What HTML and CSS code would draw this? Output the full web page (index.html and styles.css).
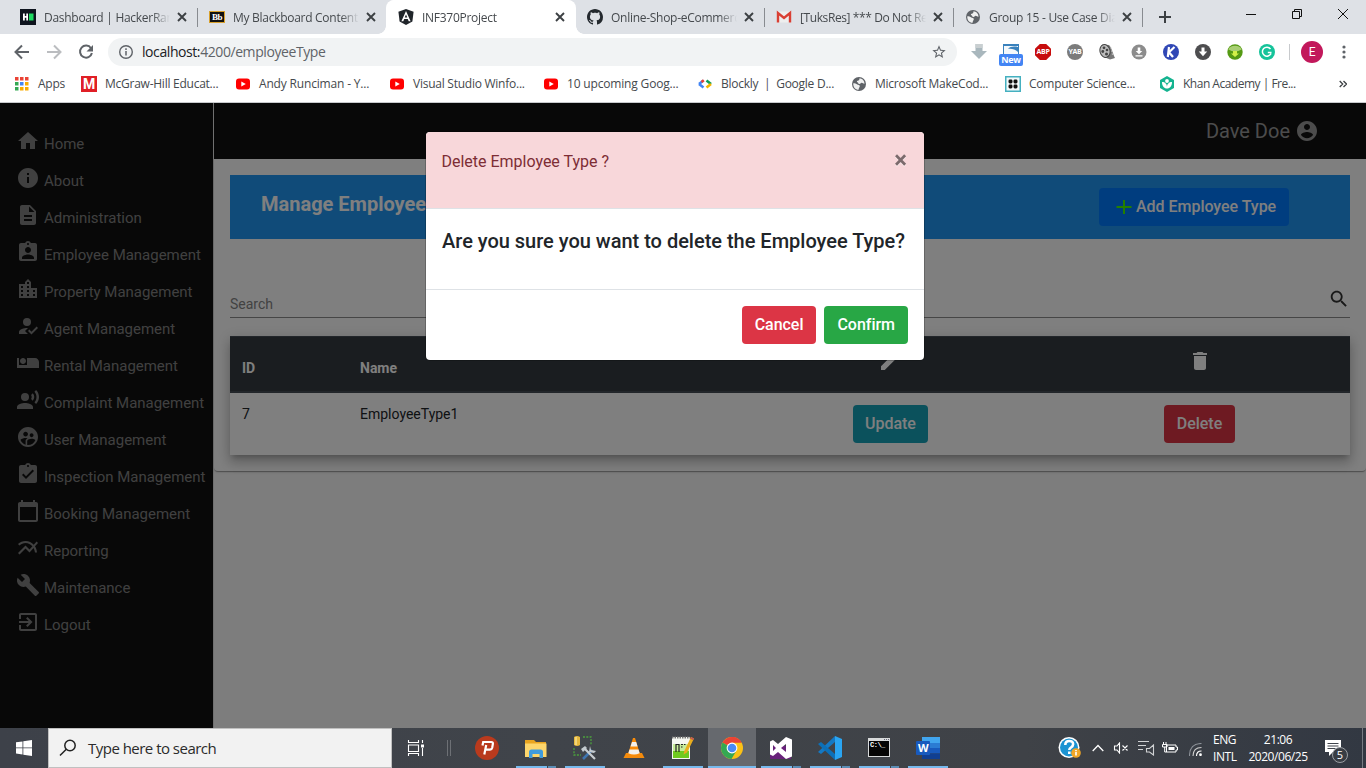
FILE: index.html
```html
<!DOCTYPE html>
<html lang="en">
<head>
<meta charset="utf-8">
<title>INF370Project</title>
<link rel="stylesheet" href="styles.css">
</head>
<body>
<svg class="defs" width="0" height="0" aria-hidden="true">
  <symbol id="x" viewBox="0 0 10 10"><path d="M1 1l8 8M9 1L1 9" stroke="#3c4043" stroke-width="1.9" fill="none"/></symbol>
  <symbol id="yt" viewBox="0 0 16 16"><rect x="1" y="2.6" width="14" height="11" rx="3" fill="#f00"/><path d="M6.300 5.400v5.200L10.800 8z" fill="#fff"/></symbol>
  <symbol id="globe" viewBox="0 0 16 16"><circle cx="8" cy="8" r="7" fill="#5f6368"/><path d="M8.500 2.200c2.600.2 5 2.200 5 5.600-1.200.2-1.600-1-2.800-1-1.200-.1-1.200 1.600-2.700 1.200-.8-.3-.6-1.400-1.500-1.800-.9-.3-.7-1.200.2-1.500 1-.4 1.700-.4 1.800-2.500zM2.300 7.200c1.500.1 3 .3 4 1.300.8.7 2.200.4 2.500 1.400.2 1-1.200 1.400-1.200 3.900-3.200 0-5.700-3-5.300-6.600z" fill="#fff" opacity=".9"/></symbol>
</svg>

<header class="browser">
  <div class="tabs">
    <div class="tab">
      <svg class="fav" viewBox="0 0 16 16"><rect width="16" height="16" fill="#0e141e"/><path d="M3 4.500h1.800v2.600h1.500V4.500h1.700v7H6.300V8.800H4.800v2.700H3z" fill="#fff"/><rect x="9" y="4.500" width="4.500" height="7" fill="#1fdc62"/></svg>
      <span class="tab-title">Dashboard | HackerRank</span><svg class="close"><use href="#x"/></svg>
    </div>
    <div class="tab divided">
      <span class="bb">Bb</span>
      <span class="tab-title">My Blackboard Content</span><svg class="close"><use href="#x"/></svg>
    </div>
    <div class="tab active">
      <svg class="fav" viewBox="0 0 16 16"><path d="M8 0l7.600 2.700-1.200 9.800L8 16l-6.400-3.500L.4 2.700z" fill="#20252a"/><path d="M8 2L3.400 12.200h1.900l.9-2.300h3.600l.9 2.300h1.900zM8 5.400l1.300 3.100H6.700z" fill="#fff"/></svg>
      <span class="tab-title">INF370Project</span><svg class="close"><use href="#x"/></svg>
    </div>
    <div class="tab">
      <svg class="fav" viewBox="0 0 16 16"><path fill="#24292e" d="M8 0C3.580 0 0 3.580 0 8c0 3.540 2.290 6.530 5.470 7.590.4.070.55-.17.55-.38 0-.19-.01-.82-.01-1.490-2.010.37-2.530-.49-2.690-.94-.09-.23-.48-.94-.82-1.130-.28-.15-.68-.52-.01-.53.63-.01 1.080.58 1.230.82.72 1.210 1.870.87 2.330.66.070-.52.28-.87.51-1.070-1.780-.2-3.640-.89-3.640-3.950 0-.87.31-1.590.82-2.150-.08-.2-.36-1.020.08-2.120 0 0 .67-.21 2.200.82.64-.18 1.320-.27 2-.27s1.360.09 2 .27c1.530-1.040 2.200-.82 2.200-.82.44 1.100.16 1.920.08 2.120.51.56.82 1.270.82 2.150 0 3.070-1.870 3.750-3.650 3.950.29.25.54.73.54 1.480 0 1.070-.01 1.930-.01 2.200 0 .21.15.46.55.38A8.010 8.010 0 0016 8c0-4.420-3.580-8-8-8z"/></svg>
      <span class="tab-title">Online-Shop-eCommerce</span><svg class="close"><use href="#x"/></svg>
    </div>
    <div class="tab divided">
      <svg class="fav" viewBox="0 0 16 16"><path d="M1 2.500h14v11H1z" fill="#eee"/><path d="M2 13.500V4l6 5 6-5v9.500" fill="none" stroke="#d93f33" stroke-width="2.400"/></svg>
      <span class="tab-title tight">[TuksRes] *** Do Not Reply</span><svg class="close"><use href="#x"/></svg>
    </div>
    <div class="tab divided last">
      <svg class="fav"><use href="#globe"/></svg>
      <span class="tab-title">Group 15 - Use Case Diagram</span><svg class="close"><use href="#x"/></svg>
    </div>
    <svg class="newtab" viewBox="0 0 12 12"><path d="M6 0v12M0 6h12" stroke="#3c4043" stroke-width="2"/></svg>
    <div class="winctl">
      <svg viewBox="0 0 12 12"><path d="M1 6.500h10" stroke="#111"/></svg>
      <svg viewBox="0 0 12 12"><path d="M1.500 3.500h7v7h-7zM3.500 3.500v-2h7v7h-2" stroke="#111" fill="none"/></svg>
      <svg viewBox="0 0 12 12"><path d="M1 1l10 10M11 1L1 11" stroke="#111" fill="none"/></svg>
    </div>
  </div>

  <div class="toolbar">
    <div class="nav">
      <svg viewBox="0 0 16 16"><path d="M15 8H2M8 1.500L1.500 8 8 14.500" stroke="#5f6368" stroke-width="2" fill="none"/></svg>
      <svg viewBox="0 0 16 16"><path d="M1 8h13M8 1.500L14.500 8 8 14.500" stroke="#bbbdc0" stroke-width="2" fill="none"/></svg>
      <svg viewBox="0 0 16 16"><path d="M13 4.200A6 6 0 1013.900 9" stroke="#5f6368" stroke-width="2" fill="none"/><path d="M15 1v6.500H8.500z" fill="#5f6368"/></svg>
    </div>
    <div class="omnibox">
      <svg class="info" viewBox="0 0 16 16"><circle cx="8" cy="8" r="6.300" fill="none" stroke="#5f6368" stroke-width="1.400"/><path d="M8 7v4.500M8 4.300v1.600" stroke="#5f6368" stroke-width="1.500"/></svg>
      <span class="url">localhost:<i>4200/employeeType</i></span>
      <svg class="star" viewBox="0 0 24 24"><path fill="#5f6368" d="M22 9.240l-7.190-.62L12 2 9.190 8.630 2 9.240l5.460 4.730L5.820 21 12 17.270 18.180 21l-1.630-7.030L22 9.240zM12 15.400l-3.760 2.270 1-4.280-3.320-2.880 4.380-.38L12 6.100l1.710 4.040 4.380.38-3.320 2.880 1 4.280L12 15.400z"/></svg>
    </div>
    <div class="exts">
      <svg viewBox="0 0 16 16"><path d="M4.500 0h7v7H16l-8 8-8-8h4.500z" fill="#a9b7bd"/><path d="M4.500 0h7v4h-7z" fill="#c9cfd1"/></svg>
      <div class="ext-new"><svg viewBox="0 0 16 16"><path d="M0 0h16v10H0z" fill="#3a82bd"/><path d="M1 2h14v8H1z" fill="#f4f8fb"/><path d="M5 5c2-2.500 6-3 10-2v5C12 5 8 4.500 5 5z" fill="#3a82bd"/></svg><b>New</b></div>
      <div class="ext-disc abp">ABP</div>
      <div class="ext-disc yab">YAB</div>
      <svg viewBox="0 0 16 16"><path d="M3 .5l7 .5c3 3 4 9 6 13l-5 1.500L5 13z" fill="#777"/><ellipse cx="6" cy="7" rx="5" ry="6.500" fill="#bbb" stroke="#444" transform="rotate(-15 6 7)"/><g fill="#444"><circle cx="5" cy="3.800" r="1.400"/><circle cx="8" cy="6" r="1.300"/><circle cx="3.800" cy="7.500" r="1.400"/><circle cx="7.500" cy="10" r="1.500"/></g><path d="M11.500 4l1.500.2M12.200 7l1.500.2M12.800 10l1.500.2" stroke="#ddd"/></svg>
      <svg viewBox="0 0 16 16"><circle cx="8" cy="8" r="7.500" fill="#8c8c8c"/><path d="M6.700 3.500h2.600V7h2L8 10.300 4.700 7h2zM4.500 11.300h7v1.200h-7z" fill="#fff"/></svg>
      <svg viewBox="0 0 16 16"><circle cx="8" cy="8" r="8" fill="#3047b5"/><path d="M6 3L4.800 13M11.500 3L6 8.300l4 4.700" stroke="#fff" stroke-width="2.200" fill="none"/></svg>
      <svg viewBox="0 0 16 16"><circle cx="8" cy="8" r="8" fill="#4d4d4f"/><path d="M6.500 3.500h3v4h2.700L8 12.300 3.800 7.500h2.700z" fill="#fff"/></svg>
      <svg viewBox="0 0 16 16"><circle cx="8" cy="8" r="7.700" fill="#559a14"/><path d="M1.300 5.500a7 5.300 0 0113.400 0q-6.700 4-13.400 0z" fill="#a9cf74"/><path d="M6 7h4v2.500h2L8 13 4 9.500h2z" fill="#d3f048"/></svg>
      <svg viewBox="0 0 16 16"><circle cx="8" cy="8" r="8" fill="#15c39a"/><path d="M11.500 5A4.500 4.500 0 1012 9.500M12.500 8.500H8.800" stroke="#fff" stroke-width="1.500" fill="none"/></svg>
    </div>
    <i class="sep"></i>
    <div class="avatar">E</div>
    <svg class="dots" viewBox="0 0 4 14"><g fill="#5f6368"><circle cx="2" cy="2" r="1.600"/><circle cx="2" cy="7" r="1.600"/><circle cx="2" cy="12" r="1.600"/></g></svg>
  </div>

  <div class="bookmarks">
    <div class="bm apps"><svg viewBox="0 0 14 14"><g><path d="M0 0h3.500v3.500H0zM5 0h3.500v3.500H5zM10 0h3.500v3.500H10z" fill="#ea4335"/><path d="M0 5h3.500v3.500H0z" fill="#34a853"/><path d="M5 5h3.500v3.500H5z" fill="#4285f4"/><path d="M10 5h3.500v3.500H10z" fill="#f9ab00"/><path d="M0 10h3.500v3.500H0z" fill="#34a853"/><path d="M5 10h3.500v3.500H5zM10 10h3.500v3.500H10z" fill="#f9ab00"/></g></svg><span>Apps</span></div>
    <div class="bm"><span class="mh">M</span><span>McGraw-Hill Educat...</span></div>
    <div class="bm loose"><svg><use href="#yt"/></svg><span>Andy Runciman - Y...</span></div>
    <div class="bm"><svg><use href="#yt"/></svg><span>Visual Studio Winfo...</span></div>
    <div class="bm loose"><svg><use href="#yt"/></svg><span>10 upcoming Goog...</span></div>
    <div class="bm"><svg viewBox="0 0 16 16" fill="none" stroke-width="2.600"><path d="M6.500 4.500L2 8" stroke="#4285f4"/><path d="M6.800 4.300L4.500 6" stroke="#ea4335"/><path d="M2 8l4.500 3.500" stroke="#4285f4"/><path d="M9.500 4.500L14 8" stroke="#0f9d58"/><path d="M14 8l-4.500 3.500" stroke="#f4b400"/></svg><span>Blockly&nbsp; |&nbsp; Google D...</span></div>
    <div class="bm"><svg><use href="#globe"/></svg><span>Microsoft MakeCod...</span></div>
    <div class="bm"><svg viewBox="0 0 16 16"><rect x=".75" y=".75" width="14.500" height="14.500" fill="#f4fafb" stroke="#45b0c0" stroke-width="1.500"/><g fill="#111"><rect x="3.500" y="3.500" width="4" height="4" rx="1.400"/><rect x="8.500" y="3.500" width="4" height="4" rx="1.400"/><rect x="3.500" y="8.500" width="4" height="4" rx="1.400"/><rect x="8.500" y="8.500" width="4" height="4" rx="1.400"/></g></svg><span>Computer Science...</span></div>
    <div class="bm khan"><svg viewBox="0 0 16 16"><path d="M8 0l7 4v8l-7 4-7-4V4z" fill="#14b390"/><circle cx="8" cy="5" r="1.900" fill="#fff"/><path d="M3 6c3 0 5 2 5 5 0-3 2-5 5-5 0 4-2 6.500-5 6.500S3 10 3 6z" fill="#fff"/></svg><span>Khan Academy | Fre...</span></div>
    <svg class="more" viewBox="0 0 8 8"><path d="M.7 1l3 3-3 3M4.500 1l3 3-3 3" fill="none" stroke="#3c4043" stroke-width="1.300"/></svg>
  </div>
</header>

<div class="viewport">
  <nav class="sidebar">
    <a><svg viewBox="0 0 24 24"><path d="M10 20v-6h4v6h5v-8h3L12 3 2 12h3v8z"/></svg><span>Home</span></a>
    <a><svg viewBox="0 0 24 24"><path d="M12 2C6.480 2 2 6.480 2 12s4.480 10 10 10 10-4.480 10-10S17.520 2 12 2zm1 15h-2v-6h2v6zm0-8h-2V7h2v2z"/></svg><span>About</span></a>
    <a><svg viewBox="0 0 24 24"><path d="M14 2H6c-1.100 0-1.990.9-1.990 2L4 20c0 1.100.89 2 1.990 2H18c1.100 0 2-.9 2-2V8l-6-6zm2 16H8v-2h8v2zm0-4H8v-2h8v2zm-3-5V3.500L18.500 9H13z"/></svg><span>Administration</span></a>
    <a><svg viewBox="0 0 24 24"><path d="M19 3h-4.180C14.400 1.840 13.300 1 12 1c-1.300 0-2.400.84-2.820 2H5c-1.100 0-2 .9-2 2v14c0 1.100.9 2 2 2h14c1.100 0 2-.9 2-2V5c0-1.100-.9-2-2-2zm-7 0c.55 0 1 .45 1 1s-.45 1-1 1-1-.45-1-1 .45-1 1-1zm0 4c1.660 0 3 1.340 3 3s-1.340 3-3 3-3-1.340-3-3 1.340-3 3-3zm6 12H6v-1.400c0-2 4-3.100 6-3.100s6 1.100 6 3.100V19z"/></svg><span>Employee Management</span></a>
    <a><svg viewBox="0 0 24 24"><path d="M15 11V5l-3-3-3 3v2H3v14h18V11h-6zm-8 8H5v-2h2v2zm0-4H5v-2h2v2zm0-4H5V9h2v2zm6 8h-2v-2h2v2zm0-4h-2v-2h2v2zm0-4h-2V9h2v2zm0-4h-2V5h2v2zm6 12h-2v-2h2v2zm0-4h-2v-2h2v2z"/></svg><span>Property Management</span></a>
    <a><svg viewBox="0 0 24 24"><path d="M9 17l3-2.940c-.39-.04-.68-.06-1-.06-2.670 0-8 1.340-8 4v2h9l-3-3z"/><circle cx="11" cy="8" r="4"/><path d="M15.470 20.500L12 17l1.400-1.410 2.070 2.080 5.130-5.170 1.400 1.410z"/></svg><span>Agent Management</span></a>
    <a><svg viewBox="0 0 24 24"><path d="M7 13c1.650 0 3-1.350 3-3S8.650 7 7 7s-3 1.350-3 3 1.350 3 3 3zm12-6h-8v7H3V7H1v10h22v-6c0-2.210-1.790-4-4-4z"/></svg><span>Rental Management</span></a>
    <a><svg viewBox="0 0 24 24"><circle cx="9" cy="9" r="4"/><path d="M9 15c-2.670 0-8 1.340-8 4v2h16v-2c0-2.660-5.330-4-8-4zm7.760-9.640l-1.680 1.690c.84 1.180.84 2.710 0 3.890l1.680 1.690c2.020-2.020 2.020-5.070 0-7.270zM20.070 2l-1.630 1.630c2.770 3.020 2.770 7.560 0 10.740L20.070 16c3.900-3.890 3.910-9.950 0-14z"/></svg><span>Complaint Management</span></a>
    <a><svg viewBox="0 0 24 24"><path d="M11.990 2c-5.520 0-10 4.480-10 10s4.480 10 10 10 10-4.480 10-10-4.480-10-10-10zm3.610 6.340c1.070 0 1.930.86 1.930 1.930 0 1.070-.86 1.930-1.930 1.930-1.070 0-1.930-.86-1.930-1.930-.01-1.070.86-1.930 1.930-1.930zm-6-1.580c1.300 0 2.360 1.060 2.360 2.360 0 1.300-1.060 2.360-2.360 2.360s-2.360-1.060-2.360-2.360c0-1.310 1.050-2.360 2.360-2.360zm0 9.130v3.750c-2.400-.75-4.300-2.600-5.140-4.960 1.050-1.120 3.670-1.690 5.140-1.690.53 0 1.200.08 1.900.22-1.640.87-1.900 2.020-1.900 2.680zM11.990 20c-.27 0-.53-.01-.79-.04v-4.070c0-1.420 2.940-2.130 4.400-2.130 1.070 0 2.920.39 3.840 1.150-1.170 2.970-4.060 5.090-7.450 5.090z"/></svg><span>User Management</span></a>
    <a><svg viewBox="0 0 24 24"><path d="M19 3h-4.180C14.400 1.840 13.300 1 12 1c-1.300 0-2.400.84-2.820 2H5c-1.100 0-2 .9-2 2v14c0 1.100.9 2 2 2h14c1.100 0 2-.9 2-2V5c0-1.100-.9-2-2-2zm-7 0c.55 0 1 .45 1 1s-.45 1-1 1-1-.45-1-1 .45-1 1-1zm-2 14l-4-4 1.410-1.410L10 14.170l6.590-6.590L18 9l-8 8z"/></svg><span>Inspection Management</span></a>
    <a><svg viewBox="0 0 24 24"><path d="M20 3h-1V1h-2v2H7V1H5v2H4c-1.100 0-2 .9-2 2v16c0 1.100.9 2 2 2h16c1.100 0 2-.9 2-2V5c0-1.100-.9-2-2-2zm0 18H4V8h16v13z"/></svg><span>Booking Management</span></a>
    <a><svg viewBox="0 0 24 24"><path d="M22 6.920l-1.410-1.410-2.850 3.210C15.680 6.400 12.830 5 9.610 5 6.720 5 4.070 6.160 2 8l1.420 1.420C5.120 7.930 7.270 7 9.610 7c2.740 0 5.090 1.260 6.770 3.240l-2.880 3.240-4-4L2 16.990l1.500 1.500 6-6.010 4 4 4.050-4.550c.75 1.350 1.250 2.900 1.440 4.550H21c-.22-2.300-.95-4.390-2.040-6.140L22 6.920z"/></svg><span>Reporting</span></a>
    <a><svg viewBox="0 0 24 24"><path d="M22.700 19l-9.100-9.100c.9-2.300.4-5-1.500-6.900-2-2-5-2.400-7.400-1.300L9 6 6 9 1.600 4.700C.4 7.100.9 10.100 2.900 12.100c1.900 1.900 4.600 2.400 6.900 1.500l9.100 9.100c.4.4 1 .4 1.400 0l2.300-2.300c.5-.4.5-1.100.1-1.400z"/></svg><span>Maintenance</span></a>
    <a><svg viewBox="0 0 24 24"><path d="M10.090 15.590L11.500 17l5-5-5-5-1.410 1.410L12.670 11H3v2h9.670l-2.580 2.590zM19 3H5c-1.110 0-2 .9-2 2v4h2V5h14v14H5v-4H3v4c0 1.100.89 2 2 2h14c1.100 0 2-.9 2-2V5c0-1.100-.9-2-2-2z"/></svg><span>Logout</span></a>
  </nav>
  <main class="main">
    <div class="topbar"><span>Dave Doe</span><svg viewBox="0 0 24 24"><path d="M12 2C6.480 2 2 6.480 2 12s4.480 10 10 10 10-4.480 10-10S17.520 2 12 2zm0 3c1.660 0 3 1.340 3 3s-1.340 3-3 3-3-1.340-3-3 1.340-3 3-3zm0 14.200c-2.500 0-4.710-1.280-6-3.220.03-1.990 4-3.080 6-3.080 1.990 0 5.970 1.090 6 3.080-1.290 1.940-3.500 3.220-6 3.220z"/></svg></div>
    <section class="card">
      <div class="titlebar">
        <h1>Manage Employee Type</h1>
        <button class="btn primary"><svg viewBox="0 0 22 22"><path d="M11 4v14M3.500 11h15" stroke="#46ff00" stroke-width="2"/></svg>Add Employee Type</button>
      </div>
      <div class="search"><span>Search</span><svg viewBox="0 0 24 24"><path d="M15.500 14h-.79l-.28-.27C15.410 12.590 16 11.110 16 9.500 16 5.910 13.090 3 9.500 3S3 5.910 3 9.500 5.910 16 9.500 16c1.610 0 3.090-.59 4.230-1.570l.27.28v.79l5 4.990L20.490 19l-4.990-5zm-6 0C7.010 14 5 11.990 5 9.500S7.010 5 9.500 5 14 7.010 14 9.500 11.990 14 9.500 14z"/></svg></div>
      <table class="grid">
        <colgroup><col class="c-id"><col class="c-name"><col class="c-upd"><col class="c-del"></colgroup>
        <thead><tr><th>ID</th><th>Name</th>
          <th class="mid pencil"><svg viewBox="0 0 24 24"><path d="M3 17.250V21h3.750L17.810 9.940l-3.750-3.750L3 17.250zM20.710 7.040c.39-.39.39-1.020 0-1.410l-2.340-2.340c-.39-.39-1.020-.39-1.410 0l-1.830 1.830 3.750 3.750 1.830-1.830z"/></svg></th>
          <th class="mid"><svg viewBox="0 0 24 24"><path d="M6 19c0 1.100.9 2 2 2h8c1.100 0 2-.9 2-2V7H6v12zM19 4h-3.500l-1-1h-5l-1 1H5v2h14V4z"/></svg></th></tr></thead>
        <tbody><tr><td>7</td><td>EmployeeType1</td><td class="mid"><button class="btn info-btn">Update</button></td><td class="mid"><button class="btn danger">Delete</button></td></tr></tbody>
      </table>
    </section>
  </main>
  <div class="backdrop">
    <div class="modal">
      <div class="modal-head"><span>Delete Employee Type ?</span><b>×</b></div>
      <div class="modal-body">Are you sure you want to delete the Employee Type?</div>
      <div class="modal-foot"><button class="btn danger">Cancel</button><button class="btn success">Confirm</button></div>
    </div>
  </div>
</div>

<footer class="taskbar">
  <div class="start"><svg viewBox="0 0 16 16"><path d="M0 2.300l6.500-.9v6.100H0zM7.300 1.300L16 0v7.500H7.300zM0 8.300h6.500v6.200L0 13.600zM7.300 8.300H16V16l-8.700-1.300z" fill="#fff"/></svg></div>
  <div class="tsearch"><svg viewBox="0 0 18 18"><circle cx="11" cy="6.500" r="5.200" fill="none" stroke="#222" stroke-width="1.500"/><path d="M7.300 10.200L1 16.500" stroke="#222" stroke-width="1.500"/></svg><span>Type here to search</span></div>
  <div class="taskview"><svg viewBox="0 0 18 16"><g fill="none" stroke="#fff" stroke-width="1.100"><path d="M1.500 0v2.500h10V0M1.500 16v-2.500h10V16M1.500 5h10v6.500h-10zM15.500 0v3M15.500 8v8"/></g><path d="M14 4.500h3v3h-3z" fill="#fff"/></svg><i></i></div>
  <div class="tasks">
    <div class="task"><svg viewBox="0 0 24 24"><circle cx="12" cy="12" r="12" fill="#b93a1d"/><path d="M7.500 9.500l.7-3.500h8q2 0 1.700 1.800l-.7 4q-.4 1.800-2.200 1.800h-5M11.200 9L9.300 18.500" fill="none" stroke="#fff" stroke-width="2.200"/></svg></div>
    <div class="task run two"><svg viewBox="0 0 24 24"><path d="M1 4h9l2 2h10v15H1z" fill="#e9a520"/><path d="M1 7.500h21.500V21H1z" fill="#fdd66c"/><path d="M5 22v-6q0-2.500 2.500-2.500h9Q19 13.500 19 16v6h-3.500v-4h-7v4z" fill="#3f9bdc"/></svg></div>
    <div class="task run"><svg viewBox="0 0 24 24"><path d="M1 1q3-2 6 0v8q-3 2-6 0z" fill="#e6b93e"/><path d="M3 1v8" stroke="#fff1b4"/><path d="M10 1h8v8M1 12v7h7" fill="none" stroke="#4ba13c" stroke-width="1.300" stroke-dasharray="2 1.300"/><path d="M10 23l9-9" stroke="#3e74ae" stroke-width="2.600"/><path d="M11 12l11 11" stroke="#c9ced2" stroke-width="2.200"/><path d="M8 13l4-3 2 2-4 4zM17 10l1 4 5 1-2 2-5-1z" fill="#c3cacf"/></svg></div>
    <div class="task"><svg viewBox="0 0 24 24"><path d="M4 17h16l2.500 5h-21z" fill="#f48b0c"/><path d="M11 2h2l5 16q-6 3-12 0z" fill="#fb8c08"/><path d="M10 6h4.200l1.400 4.500H8.500zM7.500 13.500h9l1.200 3.800q-5.700 2.500-11.400 0z" fill="#f4f1ec"/></svg></div>
    <div class="task run"><svg viewBox="0 0 24 24"><path d="M1 1h18v22H1z" fill="#f5f7f1"/><path d="M2 8h16v14H2z" fill="#c6ec9a"/><path d="M2 15h16v7H2z" fill="#6fca1f"/><path d="M1 1.500h18" stroke="#777" stroke-width="2" stroke-dasharray="1.500 1"/><path d="M5 16V8.500h3V16M10 8.500h2M10 11h1.500M13 8.500h1.500" stroke="#222" stroke-width="1.200" fill="none"/><path d="M12.500 18.500l.8-3.500L20 1l3 1.500-7 14z" fill="#e9ad1e"/><path d="M20 1l3 1.500-.8 1.800-3-1.500z" fill="#c45b50"/></svg></div>
    <div class="task run current"><svg viewBox="0 0 24 24"><circle cx="12" cy="12" r="11" fill="#fbc116"/><path d="M12 12L2.500 6.500A11 11 0 0121.500 6.500H12z" fill="#ea4335"/><path d="M12 12L2.500 6.500A11 11 0 0011.500 23l5-8.500z" fill="#34a853"/><path d="M12 6.500h9.500A11 11 0 0012 1z" fill="#ea4335"/><circle cx="12" cy="12" r="5.400" fill="#fff"/><circle cx="12" cy="12" r="4.300" fill="#4a8af4"/></svg></div>
    <div class="task run two"><svg viewBox="0 0 24 24"><path d="M1 10h21v13H1z" fill="#68217a"/><path d="M17 1l6 2.500v17L17 23l-8-7-5 4-3-1.500v-13L4 4l5 4zM17 8l-5 4 5 4zM4 9v6l3-3z" fill="#fff" fill-rule="evenodd"/></svg></div>
    <div class="task run two"><svg viewBox="0 0 24 24"><path d="M17 0l7 3v18l-7 3z" fill="#2aa5f2"/><path d="M17 0v6L3 18l-3-2z" fill="#1479c4"/><path d="M17 24v-6L3 6 0 8z" fill="#0c70b8"/></svg></div>
    <div class="task run two"><svg viewBox="0 0 24 24"><path d="M1 2h22v19H1z" fill="#d8dadb"/><path d="M2 5h20v15H2z" fill="#050505"/><path d="M17 3.500h5" stroke="#667" stroke-dasharray="1 1"/></svg><em>C:\_</em></div>
    <div class="task run"><svg viewBox="0 0 24 24"><path d="M6 1h18v6H6z" fill="#41a5ee"/><path d="M6 7h18v5H6z" fill="#2b7cd3"/><path d="M6 12h18v5.500H6z" fill="#185abd"/><path d="M6 17.500h18V23H6z" fill="#103f91"/><rect y="5" width="14" height="14" rx="1" fill="#185abd"/></svg><strong>W</strong></div>
  </div>
  <div class="tray">
    <svg class="help" viewBox="0 0 24 24"><circle cx="11" cy="11.500" r="10.500" fill="#fff"/><circle cx="11" cy="11.500" r="9" fill="#1b93d2"/><path d="M7.300 9q0-4 3.900-4t3.900 3.300q0 1.800-2 3-1.800 1-1.800 2.700M11.300 15.500v2.600" fill="none" stroke="#fff" stroke-width="2.600"/><circle cx="18" cy="17" r="4.800" fill="#f0a626"/><path d="M18 14v1.200M18 16v3.500" stroke="#fff" stroke-width="1.600"/></svg>
    <svg class="chev" viewBox="0 0 12 8"><path d="M.7 7L6 1.500 11.300 7" fill="none" stroke="#fff" stroke-width="1.300"/></svg>
    <svg class="vol" viewBox="0 0 16 12"><path d="M1.500 4H4l2.500-3v10L4 8H1.500zM9.500 3.500l5 5M14.500 3.500l-5 5" fill="none" stroke="#fff" stroke-width="1.100"/></svg>
    <svg class="aud" viewBox="0 0 17 16"><path d="M0 1.500h11M0 5.500h8M0 9.500h5M8.500 8.500h3l4-3.500v10l-4-3h-3z" fill="none" stroke="#d0d2d4" stroke-width="1.100"/></svg>
    <svg class="bat" viewBox="0 0 16 12"><path d="M4.500 3h9.500v2h1.500v3H14v2H4.500z" fill="none" stroke="#fff"/><path d="M6.500 5h6v3h-6z" fill="#fff"/><path d="M1.500 0v2M4 0v2M.5 2.500h4.500V5H.5zM2.700 5v5h2" stroke="#fff" fill="none"/></svg>
    <svg class="wifi" viewBox="0 0 13 13"><g fill="none" stroke="#8d9299" stroke-width="1.100"><path d="M.5 13Q.5.500 12.500.500"/><path d="M4 13q0-8.500 8.500-8.500" stroke="#ccc"/><path d="M7.500 13q0-5 5-5" stroke="#fff"/></g><circle cx="11.500" cy="11.700" r="1.400" fill="#fff"/></svg>
    <div class="lang"><span>ENG</span><span>INTL</span></div>
    <div class="clock"><span>21:06</span><span>2020/06/25</span></div>
    <div class="notif"><svg viewBox="0 0 16 16"><path d="M0 0h16v12H8l-4 4v-4H0z" fill="#fff"/><path d="M2.500 3.500h11M2.500 6h11M2.500 8.500h8" stroke="#40454d"/></svg><span>5</span></div>
    <div class="peek"></div>
  </div>
</footer>
</body>
</html>
```
FILE: styles.css
```css
* { box-sizing: border-box; }
body { margin: 0; width: 1366px; height: 768px; overflow: hidden; display: flex; flex-direction: column; font-family: Roboto, "Liberation Sans", sans-serif; background: #fff; }
svg { display: block; flex: none; }
.defs { position: absolute; }
button { font-family: inherit; }

/* Browser frame */
.browser { height: 103px; flex: none; font: 12px "Open Sans", "Noto Sans", sans-serif; letter-spacing: -.28px; color: #45494d; border-bottom: 1px solid #c8cacd; }
.tabs { height: 34px; display: flex; align-items: center; background: #dee1e6; padding-left: 8px; }
.tab { position: relative; width: 189px; height: 34px; display: flex; align-items: center; padding: 0 10px 0 12px; flex: none; }
.tab.divided::before, .tab.last::after { content: ""; position: absolute; left: 0; top: 8px; width: 1px; height: 19px; background: #888b90; }
.tab.last::after { left: auto; right: -1px; }
.tab.active { background: #fff; border-radius: 8px 8px 0 0; box-shadow: 1px 0 0 #fff; }
.tab.active::before, .tab.active::after { content: ""; position: absolute; bottom: 0; width: 8px; height: 8px; }
.tab.active::before { left: -8px; background: radial-gradient(circle at 0 0, transparent 7.5px, #fff 8px); }
.tab.active::after { right: -9px; background: radial-gradient(circle at 100% 0, transparent 7.5px, #fff 8px); }
.fav { width: 16px; height: 16px; }
.bb { width: 16px; height: 12px; background: #111; border: 1px solid #d8a02c; color: #fff; font: bold 9px/10px "Liberation Serif", serif; letter-spacing: -.5px; text-align: center; }
.tab-title { width: 126px; margin-left: 8px; overflow: hidden; white-space: nowrap; -webkit-mask-image: linear-gradient(90deg, #000 108px, transparent 126px); mask-image: linear-gradient(90deg, #000 108px, transparent 126px); }
.tab-title.tight { letter-spacing: -.4px; }
.close { width: 10px; height: 10px; margin-left: 7px; }
.newtab { width: 12px; height: 12px; margin-left: 17px; }
.winctl { display: flex; margin-left: 74px; gap: 34px; padding-bottom: 6px; }
.winctl svg { width: 12px; height: 12px; }

.toolbar { height: 36px; display: flex; align-items: center; padding-left: 14px; }
.nav { display: flex; gap: 16px; }
.nav svg { width: 16px; height: 16px; }
.omnibox { width: 849px; height: 28px; margin-left: 14px; border-radius: 14px; background: #f1f3f4; display: flex; align-items: center; padding: 0 10px; }
.info, .star { width: 16px; height: 16px; }
.url { flex: 1; margin-left: 8px; padding-bottom: 1px; font-size: 14px; letter-spacing: -.42px; color: #202124; }
.url i { font-style: normal; color: #5f6368; }
.exts { display: flex; gap: 16px; margin-left: 14px; }
.exts > * { width: 16px; height: 16px; }
.ext-new { position: relative; }
.ext-new b { position: absolute; left: -4px; top: 10px; width: 24px; height: 12px; border-radius: 2px; background: #4285f4; color: #fff; font: bold 9px/12px "Open Sans", sans-serif; text-align: center; }
.ext-disc { color: #fff; font: bold 7px/16px "Open Sans", sans-serif; text-align: center; letter-spacing: -.3px; }
.abp { background: #c70d0d; clip-path: polygon(30% 0, 70% 0, 100% 30%, 100% 70%, 70% 100%, 30% 100%, 0 70%, 0 30%); }
.yab { background: #7b7b7b; border-radius: 8px; }
.sep { width: 1px; height: 16px; margin-left: 14px; background: #c8cacd; }
.avatar { width: 22px; height: 22px; margin-left: 11px; border-radius: 50%; background: #c2185b; color: #fff; text-align: center; font: 12px/22px Roboto, sans-serif; }
.dots { width: 4px; height: 14px; margin-left: 19px; }

.bookmarks { height: 32px; display: flex; align-items: center; padding: 0 0 5px 15px; }
.bm { width: 154px; display: flex; align-items: center; gap: 8px; white-space: nowrap; flex: none; letter-spacing: -.25px; }
.bm.apps { width: 66px; gap: 9px; }
.bm.loose { letter-spacing: -.17px; }
.bm.khan { letter-spacing: -.5px; }
.bm svg { width: 16px; height: 16px; }
.bm.apps svg { width: 14px; height: 14px; }
.mh { width: 16px; height: 16px; background: #e01f26; color: #fff; text-align: center; font: bold 14px/16px Roboto, sans-serif; }
.more { width: 8px; height: 8px; margin-left: 26px; }

/* Application */
.viewport { position: relative; height: 625px; flex: none; display: flex; background: #fafafa; }
.sidebar { width: 214px; background: #111; border-right: 1px solid #e0e0e0; padding: 20px 0 0 16px; }
.sidebar a { height: 37px; display: flex; gap: 4px; color: #818181; font-size: 15px; letter-spacing: -.02px; white-space: nowrap; line-height: 18px; }
.sidebar svg { width: 24px; height: 24px; margin-top: 6px; fill: #818181; }
.sidebar span { margin-top: 12px; }
.main { flex: 1; }
.topbar { height: 56px; background: #111; display: flex; align-items: center; justify-content: flex-end; gap: 5px; padding: 0 47px 0 0; color: #999; font-size: 20px; }
.topbar svg { width: 24px; height: 24px; fill: #999; }
.card { height: 312px; background: #fff; border-radius: 0 0 4px 4px; padding: 16px; box-shadow: 0 2px 1px -1px rgba(0,0,0,.2), 0 1px 1px rgba(0,0,0,.14), 0 1px 3px rgba(0,0,0,.12); }
.titlebar { height: 64px; background: #2196f3; display: flex; justify-content: space-between; align-items: center; padding: 0 61px 0 31px; }
.titlebar h1 { margin: 0 0 6px; color: #fff; font-size: 20px; line-height: 24px; font-weight: 700; }
.btn { height: 38px; border: 0; border-radius: 4px; padding: 0 13px; color: #fff; font-size: 16px; font-weight: 500; letter-spacing: -.03px; line-height: 38px; display: inline-flex; align-items: center; white-space: nowrap; }
.primary { background: #007bff; width: 190px; padding: 0 0 0 14px; gap: 1px; }
.primary svg { width: 22px; height: 22px; }
.danger { background: #dc3545; }
.success { background: #28a745; }
.info-btn { background: #17a2b8; padding: 0 12.5px; }
.search { height: 79px; border-bottom: 1px solid #8c8c8c; display: flex; justify-content: space-between; align-items: flex-end; color: #858585; font-size: 14px; line-height: 16px; padding-bottom: 5px; }
.search svg { width: 22px; height: 22px; fill: #333; margin: 0 0 2px; }
.grid { margin-top: 18px; width: 1120px; height: 119px; border-collapse: separate; border-spacing: 0; table-layout: fixed; background: #fff; box-shadow: 0 5px 5px -3px rgba(0,0,0,.2), 0 8px 10px 1px rgba(0,0,0,.14), 0 3px 14px 2px rgba(0,0,0,.12); font-size: 14px; color: #212529; }
.c-id { width: 118px; } .c-name { width: 384px; } .c-upd { width: 317px; } .c-del { width: 301px; }
.grid th { height: 57px; background: #343a40; border-top: 1px solid #454d55; border-bottom: 2px solid #454d55; color: #fff; text-align: left; padding: 7px 12px 0; line-height: 18px; font-weight: 700; }
.grid td { height: 62px; vertical-align: top; padding: 12px; line-height: 18px; }
.grid .mid { text-align: center; }
.grid th svg { width: 24px; height: 24px; fill: #fff; margin: -14px auto 0; }
.grid th.pencil svg { transform: translateX(-1px); }

.backdrop { position: absolute; inset: 0; background: rgba(0,0,0,.5); display: flex; align-items: flex-start; padding: 29px 0 0 426px; }
.modal { width: 498px; height: 228px; background: #fff; border-radius: 4px; box-shadow: 0 0 0 1px rgba(0,0,0,.2); overflow: hidden; }
.modal-head { height: 77px; background: #f8d7da; border-bottom: 1px solid #dee2e6; display: flex; justify-content: space-between; align-items: flex-start; padding: 18px 17px 0 15.5px; color: #7d2d35; font-size: 16px; letter-spacing: -.01px; line-height: 24px; }
.modal-head b { margin-top: -1px; color: #000; opacity: .5; font-size: 24px; line-height: 22px; text-shadow: 0 1px 0 #fff; }
.modal-body { height: 81px; border-bottom: 1px solid #dee2e6; padding: 20px 16px; color: #212529; font-size: 20px; letter-spacing: -.01px; line-height: 24px; font-weight: 500; white-space: nowrap; }
.modal-foot { display: flex; justify-content: flex-end; gap: 8px; padding: 16px; }

/* Windows taskbar */
.taskbar { height: 40px; flex: none; display: flex; background: linear-gradient(90deg, #3d4149, #40444a 40%, #3f4247 75%, #323842); font-family: "Open Sans", "Noto Sans", sans-serif; color: #fff; }
.start { width: 48px; display: grid; place-items: center; }
.start svg { width: 16px; height: 16px; }
.tsearch { width: 344px; background: #f2f2f2; border: 1px solid #c0c0c0; display: flex; align-items: center; gap: 11px; padding-left: 10px; color: #2b2b2b; font-size: 15px; letter-spacing: -.52px; }
.tsearch svg { width: 18px; height: 18px; }
.taskview { width: 71px; display: flex; align-items: center; padding-left: 15px; gap: 22px; }
.taskview svg { width: 18px; height: 16px; }
.taskview i { width: 4px; height: 16px; border: solid #6d7075; border-width: 0 1px; }
.tasks { display: flex; gap: 1px; }
.task { position: relative; width: 48px; height: 40px; display: grid; place-items: center; }
.task svg { width: 24px; height: 24px; }
.task.run::after { content: ""; position: absolute; left: 4px; bottom: 0; width: 40px; height: 2px; background: #76b9ed; }
.task.two::after { background: linear-gradient(90deg, #76b9ed 31px, #3f4247 31px, #3f4247 32px, #5b8db5 32px); }
.task.current { background: #66696e; }
.task.current::after { left: 0; width: 48px; }
.task em, .task strong { position: absolute; font-style: normal; color: #fff; }
.task em { left: 15px; top: 13px; font: bold 7px "Liberation Mono", monospace; letter-spacing: -.5px; }
.task strong { left: 14px; top: 12px; font: bold 11px/15px "Open Sans", sans-serif; }
.tray { margin-left: auto; display: flex; align-items: center; }
.help { width: 24px; height: 24px; margin-right: 10px; }
.chev { width: 12px; height: 8px; margin-right: 9px; }
.vol { width: 16px; height: 12px; margin-right: 9px; }
.aud { width: 17px; height: 16px; margin-right: 7px; }
.bat { width: 16px; height: 12px; margin-right: 11px; }
.wifi { width: 13px; height: 13px; margin: 3px 11px 0 0; }
.lang, .clock { display: flex; flex-direction: column; font-size: 12px; line-height: 17px; letter-spacing: -.45px; padding-bottom: 1px; }
.lang { width: 26px; }
.clock { width: 60px; align-items: center; margin-left: 9px; }
.notif { position: relative; width: 16px; height: 16px; margin: 0 21px 0 17px; }
.notif svg { width: 16px; height: 16px; }
.notif span { position: absolute; left: 7px; top: 7px; width: 16px; height: 16px; border-radius: 50%; background: #383d44; border: 1px solid #9b9fa4; font-size: 11px; line-height: 14px; text-align: center; }
.peek { width: 4px; height: 40px; border-left: 1px solid #767b82; }
```
